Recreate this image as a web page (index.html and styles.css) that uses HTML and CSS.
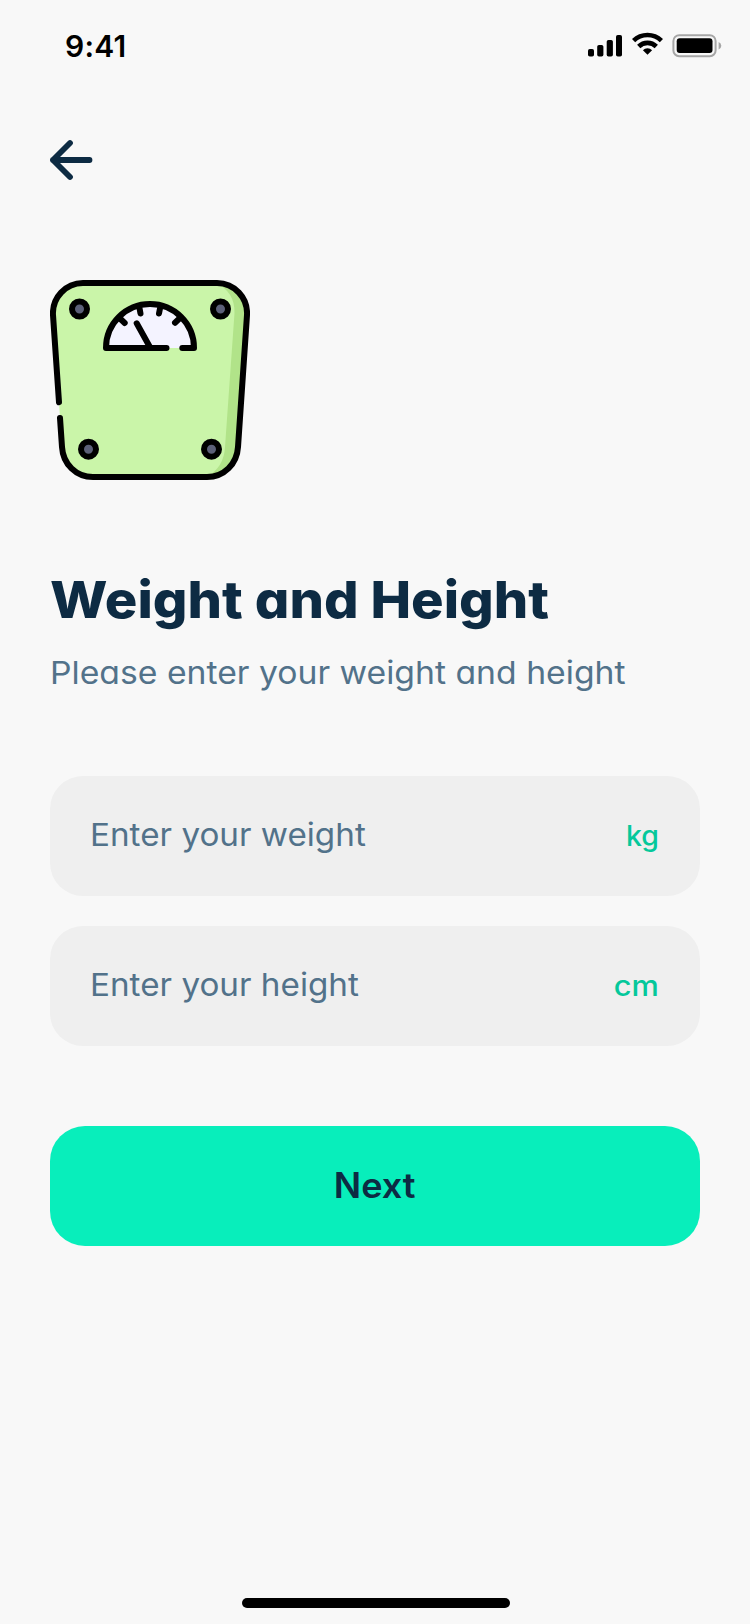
FILE: index.html
```
<!DOCTYPE html>
<html lang="en">
<head>
<meta charset="utf-8">
<title>Weight and Height</title>
<link rel="stylesheet" href="styles.css">
</head>
<body>
<div class="screen">
  <header class="status">
    <span class="time">9:41</span>
    <svg class="status-icons" width="136" height="30" viewBox="0 0 136 30">
      <rect x="0" y="19" width="6" height="7.5" rx="1.8"/>
      <rect x="9.2" y="15" width="6.2" height="11.5" rx="1.8"/>
      <rect x="18.7" y="10" width="6.2" height="16.5" rx="1.8"/>
      <rect x="28" y="5" width="6" height="21.5" rx="1.8"/>
      <g fill="none" stroke="#000" stroke-width="4.6">
        <path d="M45.6 10.6 A20 20 0 0 1 73.4 10.6"/>
        <path d="M50.7 16.5 A12.6 12.6 0 0 1 68.3 16.5"/>
      </g>
      <path d="M59.5 24.8 L54.9 20.2 A6.6 6.6 0 0 1 64.1 20.2 Z"/>
      <rect x="85.4" y="5.2" width="42.2" height="21" rx="5.8" fill="none" stroke="#a6a6a6" stroke-width="2"/>
      <rect x="88.7" y="8.3" width="35.8" height="14.8" rx="3"/>
      <path d="M130.6 12 Q133.3 13.2 133.3 15.8 Q133.3 18.4 130.6 19.6 Z" fill="#a6a6a6"/>
    </svg>
  </header>
  <main class="content">
    <svg class="back" width="44" height="44" viewBox="0 0 44 44">
      <path d="M20 5 L3 22 L20 39 M3 22 H39.5" />
    </svg>
    <svg class="scale" width="200" height="200" viewBox="0 0 200 200">
      <path fill="#caf5a9" d="M32 3 H168 Q197 5 197 33 L188 168 Q184 197 158 197 H42 Q13 195 12 168 L3 33 Q4 5 32 3Z"/>
      <path fill="#b1e389" d="M166 3 Q185 12 184.500 33 L175 167 Q174 187 157 197 Q186 196 188 168 L197 33 Q197 3 166 3Z"/>
      <path fill="#f4f3ff" d="M56 68 A44 44 0 0 1 144 68 Z"/>
      <g class="ink">
        <path d="M9 122.200 L3 35 C2 18 15.500 3 33 3 H167 C184.500 3 198 18 197 35 L188 167 C187 184 174 197 157 197 H43 C26 197 13 184 12 167 L10 138"/>
        <path d="M116.500 68 H56 A44 44 0 0 1 144 68 H132.300"/>
        <path d="M70 38.500 L74.700 43 M89.300 27 L90.500 33.500 M110.300 27 L109 33.500 M130 38 L125 42.700 M86.700 43.300 L100 67.300"/>
      </g>
      <g class="feet">
        <circle cx="29.500" cy="29" r="7.500"/>
        <circle cx="170.500" cy="29" r="7.500"/>
        <circle cx="38.500" cy="169.200" r="7.500"/>
        <circle cx="161.500" cy="169.200" r="7.500"/>
      </g>
    </svg>
    <h1 class="title">Weight and Height</h1>
    <p class="subtitle">Please enter your weight and height</p>
    <div class="fields">
      <label class="field"><span class="hint">Enter your weight</span><span class="unit unit-kg">kg</span></label>
      <label class="field"><span class="hint">Enter your height</span><span class="unit unit-cm">cm</span></label>
    </div>
    <button class="next"><span class="next-label">Next</span></button>
  </main>
  <div class="home"></div>
</div>
</body>
</html>
```

FILE: styles.css
```
* { box-sizing: border-box; }
body {
  margin: 0;
  background: #f8f8f8;
  font-family: Inter, "Liberation Sans", sans-serif;
  font-feature-settings: "cv11";
  color: #0d2b43;
}
.screen {
  width: 750px;
  height: 1624px;
  display: flex;
  flex-direction: column;
}
.status {
  height: 90px;
  padding: 30px 26px 0 65px;
  display: flex;
  justify-content: space-between;
  align-items: flex-start;
}
.time {
  font-size: 30px;
  line-height: 32px;
  font-weight: 600;
  letter-spacing: 0.2px;
  color: #000;
}
.status-icons { display: block; }
.content {
  flex: 1;
  padding: 48px 50px 0;
  display: flex;
  flex-direction: column;
}
.back {
  display: block;
  fill: none;
  stroke: #0d2b43;
  stroke-width: 5.8;
  stroke-linecap: round;
  stroke-linejoin: round;
}
.scale { display: block; margin-top: 98px; }
.ink {
  fill: none;
  stroke: #000;
  stroke-width: 6;
  stroke-linecap: round;
  stroke-linejoin: round;
}
.feet { fill: #5c6078; stroke: #000; stroke-width: 6; }
.title, .subtitle, .hint { transform-origin: left center; white-space: nowrap; }
.title, .subtitle { align-self: flex-start; }
.title {
  margin: 81px 0 0;
  font-size: 51.5px;
  line-height: 76px;
  font-weight: 800;
  transform: scaleX(1.055);
}
.subtitle {
  margin: 12px 0 0;
  font-size: 31.5px;
  line-height: 48px;
  color: #52728a;
  transform: scaleX(1.07);
}
.fields {
  margin-top: 79px;
  display: grid;
  gap: 30px;
}
.field {
  height: 120px;
  padding: 0 41px 0 40px;
  border-radius: 33px;
  background: #efefef;
  display: flex;
  align-items: center;
  justify-content: space-between;
}
.hint {
  padding-bottom: 3px;
  font-size: 31.5px;
  color: #52728a;
  transform: scaleX(1.055);
}
.unit {
  font-size: 28.5px;
  font-weight: 500;
  color: #05c89b;
  transform-origin: right center;
  padding-bottom: 1px;
}
.unit-cm { transform: scaleX(1.08); }
.next {
  margin-top: 80px;
  height: 120px;
  padding: 0 0 3px;
  border: 0;
  border-radius: 35px;
  background: #08eebb;
  color: #0d2b43;
  font: 600 35px Inter, "Liberation Sans", sans-serif;
}
.next-label { display: inline-block; transform: scaleX(1.03); }
.home {
  width: 268px;
  height: 10px;
  margin: 0 0 16px 242px;
  border-radius: 5px;
  background: #000;
}
```
